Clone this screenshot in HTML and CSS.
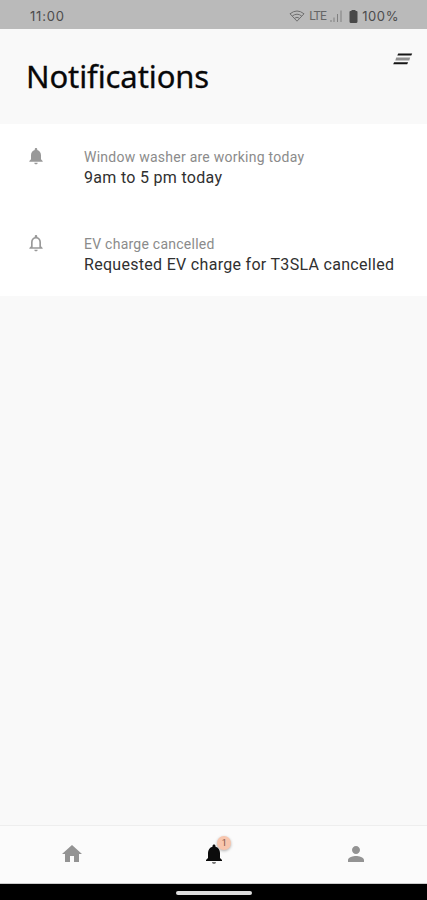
FILE: index.html
```
<!DOCTYPE html>
<html lang="en">
<head>
  <meta charset="UTF-8" />
  <meta name="viewport" content="width=device-width, initial-scale=1" />
  <title>Notifications</title>
  <link rel="stylesheet" href="styles.css">
</head>
<body>
  <div class="status-bar">
    <span class="clock">11:00</span>
    <div class="status-icons">
      <svg class="wifi" viewBox="0 0 16 12" aria-hidden="true">
        <path d="M1 3.800Q8-1.800 15 3.800L8 11.200ZM3.300 6Q8 2.400 12.700 6M5.600 8.200Q8 6.400 10.400 8.200" />
      </svg>
      <span class="network">LTE</span>
      <svg class="signal" viewBox="0 0 12 12" aria-hidden="true">
        <path d="M1 10v2M4 7.500v4.500M7.500 4v8M11 .5v11.500" />
      </svg>
      <svg class="battery" viewBox="0 0 9 13" aria-hidden="true">
        <path d="M2.500 0h4v1H7.500Q8.500 1 8.500 2v9.500Q8.500 13 7 13H2Q.5 13 .5 11.500V2Q.5 1 1.500 1h1z" />
      </svg>
      <span class="level">100%</span>
    </div>
  </div>

  <header class="header">
    <h1>Notifications</h1>
    <button class="clear-btn" aria-label="Clear all">
      <svg viewBox="0 0 20 12" aria-hidden="true">
        <path class="bar" d="M5.200 .5h14l-.9 2.100h-14z" />
        <path class="bar mid" d="M3.200 4.600h14l-.9 2.800h-14z" />
        <path class="bar" d="M1.100 9.200h14l-.9 2.100h-14z" />
      </svg>
    </button>
  </header>

  <main class="list">
    <div class="item">
      <svg class="item-icon" viewBox="0 0 24 24" aria-hidden="true">
        <path d="M12 22c1.100 0 2-.9 2-2h-4c0 1.100.89 2 2 2zm6-6v-5c0-3.070-1.640-5.640-4.500-6.320V4c0-.83-.67-1.500-1.500-1.500s-1.500.67-1.500 1.500v.68C7.630 5.360 6 7.920 6 11v5l-2 2v1h16v-1l-2-2z" />
      </svg>
      <div class="item-text">
        <div class="item-label">Window washer are working today</div>
        <div class="item-detail">9am to 5 pm today</div>
      </div>
    </div>
    <div class="item">
      <svg class="item-icon" viewBox="0 0 24 24" aria-hidden="true">
        <path d="M12 22c1.100 0 2-.9 2-2h-4c0 1.100.9 2 2 2zm6-6v-5c0-3.070-1.630-5.640-4.500-6.320V4c0-.83-.67-1.500-1.500-1.500s-1.500.67-1.500 1.500v.68C7.640 5.360 6 7.920 6 11v5l-2 2v1h16v-1l-2-2zm-2 1H8v-6c0-2.480 1.510-4.500 4-4.500s4 2.020 4 4.500v6z" />
      </svg>
      <div class="item-text">
        <div class="item-label">EV charge cancelled</div>
        <div class="item-detail">Requested EV charge for T3SLA cancelled</div>
      </div>
    </div>
  </main>

  <nav class="tabs">
    <a class="tab" aria-label="Home">
      <svg viewBox="0 0 24 24" aria-hidden="true">
        <path d="M10 20v-6h4v6h5v-8h3L12 3 2 12h3v8z" />
      </svg>
    </a>
    <a class="tab active" aria-label="Notifications">
      <svg viewBox="0 0 24 24" aria-hidden="true">
        <path d="M18 16v-5c0-3.070-1.640-5.640-4.500-6.320V4c0-.83-.67-1.500-1.500-1.500s-1.500.67-1.500 1.500v.68C7.630 5.360 6 7.920 6 11v5l-2 2v1h16v-1l-2-2z" />
        <path class="clapper" d="M12 22c1.100 0 2-.9 2-2h-4c0 1.100.89 2 2 2z" />
      </svg>
      <span class="badge">1</span>
    </a>
    <a class="tab" aria-label="Profile">
      <svg viewBox="0 0 24 24" aria-hidden="true">
        <path d="M12 12c2.210 0 4-1.790 4-4s-1.790-4-4-4-4 1.790-4 4 1.790 4 4 4zm0 2c-2.670 0-8 1.340-8 4v2h16v-2c0-2.660-5.330-4-8-4z" />
      </svg>
    </a>
  </nav>
  <div class="gesture-bar"><div class="handle"></div></div>
</body>
</html>
```

FILE: styles.css
```
* {
  box-sizing: border-box;
}

body {
  margin: 0;
  height: 100vh;
  display: flex;
  flex-direction: column;
  font-family: Roboto, "Liberation Sans", sans-serif;
  background: #f9f9f9;
  color: #303030;
}

.status-bar {
  height: 29px;
  padding: 3px 28px 0 30px;
  display: flex;
  align-items: center;
  justify-content: space-between;
  background: #bababa;
  color: #4c4c4c;
  font-family: Inter, Roboto, sans-serif;
  font-size: 13px;
}

.clock {
  letter-spacing: 0.8px;
}

.status-icons {
  display: flex;
  align-items: center;
}

.wifi {
  width: 16px;
  height: 12px;
  margin-right: 4px;
  fill: none;
  stroke: #707070;
}

.network {
  width: 21px;
  font-family: Roboto, sans-serif;
  font-size: 12px;
  letter-spacing: -0.6px;
  color: #666;
}

.signal {
  width: 12px;
  height: 12px;
  margin-right: 7px;
  fill: none;
  stroke: #808080;
}

.battery {
  width: 9px;
  height: 13px;
  margin-right: 4px;
  fill: #484848;
}

.level {
  letter-spacing: 0.6px;
}

.header {
  height: 95px;
  padding: 0 14px 0 26px;
  display: flex;
  align-items: flex-start;
  justify-content: space-between;
}

h1 {
  margin: 25px 0 0;
  font-family: "Noto Sans", sans-serif;
  font-size: 31px;
  font-weight: 400;
  line-height: 44px;
  letter-spacing: -0.1px;
  color: #080808;
  -webkit-text-stroke: 0.3px #080808;
}

.clear-btn {
  display: flex;
  margin: 24px 0 0;
  padding: 0;
  border: none;
  background: none;
}

.clear-btn svg {
  width: 20px;
  height: 12px;
}

.bar {
  fill: #151515;
}

.bar.mid {
  fill: #909090;
}

.list {
  height: 172px;
  padding-top: 24px;
  background: #fff;
}

.item {
  display: flex;
  align-items: flex-start;
  height: 87px;
  padding-left: 26px;
}

.item-icon {
  width: 20px;
  height: 20px;
  margin-right: 38px;
  margin-top: -2px;
  fill: #999;
}

.item-label {
  font-size: 14px;
  line-height: 19px;
  letter-spacing: 0.25px;
  color: #8b8b8b;
}

.item-detail {
  font-size: 16px;
  line-height: 22px;
  letter-spacing: 0.3px;
}

.tabs {
  height: 59px;
  margin-top: auto;
  display: grid;
  grid-template-columns: repeat(3, 1fr);
  background: #fbfbfb;
  border-top: 1px solid #eee;
  border-bottom: 1px solid #ccc;
}

.tab {
  position: relative;
  display: flex;
  align-items: center;
  justify-content: center;
  padding: 0 0 1px 1px;
}

.tab svg {
  width: 24px;
  height: 24px;
  fill: #939393;
}

.tab.active svg {
  fill: #0c0c0c;
}

.tab.active .clapper {
  fill: #777;
}

.badge {
  position: absolute;
  top: 10px;
  left: 75px;
  width: 14px;
  height: 14px;
  border-radius: 50%;
  background: #f8c6ae;
  box-shadow: 0 1px 3px rgba(0, 0, 0, 0.3);
  font-size: 9px;
  line-height: 14px;
  text-align: center;
  color: #7d5548;
}

.gesture-bar {
  height: 16px;
  display: flex;
  justify-content: center;
  padding-top: 7px;
  background: #000;
}

.handle {
  width: 76px;
  height: 4px;
  border-radius: 2px;
  background: #ddd;
}
```
